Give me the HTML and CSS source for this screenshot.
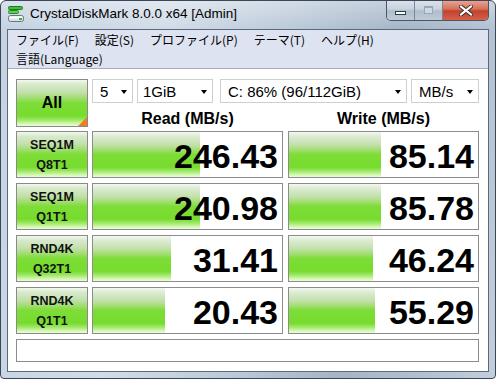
FILE: index.html
```html
<!DOCTYPE html>
<html lang="ja">
<head>
<meta charset="utf-8">
<title>CrystalDiskMark 8.0.0 x64 [Admin]</title>
<link rel="stylesheet" href="styles.css">
</head>
<body>
<div class="window">
  <div class="titlebar">
    <svg class="app-icon" width="16" height="16" viewBox="0 0 16 16">
      <rect x="0.5" y="0.5" width="14" height="3" rx="1" fill="#3fc03a" stroke="#1f7a22"/>
      <rect x="0.5" y="4.5" width="10" height="3" rx="1" fill="#5fd04a" stroke="#2a8a2a"/>
      <rect x="0.5" y="9.5" width="15" height="6" rx="2" fill="#dfe3e8" stroke="#6b7480"/>
      <rect x="1.5" y="10.5" width="13" height="2" rx="1" fill="#ffffff"/>
      <rect x="11" y="12" width="3" height="2" fill="#2fb82f"/>
    </svg>
    <span class="title">CrystalDiskMark 8.0.0 x64 [Admin]</span>
    <div class="caption">
      <div class="cap-btn cap-min"><span class="min-bar"></span></div>
      <div class="cap-btn cap-max"><span class="max-box"></span></div>
      <div class="cap-btn cap-close">
        <svg width="14" height="11" viewBox="0 0 14 11">
          <path d="M2 1.5 L12 9.5 M12 1.5 L2 9.5" stroke="#3a2a2a" stroke-width="4" stroke-linecap="square"/>
          <path d="M2 1.5 L12 9.5 M12 1.5 L2 9.5" stroke="#ffffff" stroke-width="2.2" stroke-linecap="square"/>
        </svg>
      </div>
    </div>
  </div>
  <div class="client">
    <div class="menubar">
      <div class="menu-row">
        <span class="menu-item">ファイル(F)</span>
        <span class="menu-item">設定(S)</span>
        <span class="menu-item">プロファイル(P)</span>
        <span class="menu-item">テーマ(T)</span>
        <span class="menu-item">ヘルプ(H)</span>
      </div>
      <div class="menu-row">
        <span class="menu-item">言語(Language)</span>
      </div>
    </div>
    <div class="content">
      <div class="top">
        <div class="all-btn">All<span class="corner"></span></div>
        <div class="selects">
          <div class="select sel-count"><span>5</span><span class="arrow"></span></div>
          <div class="select sel-size"><span>1GiB</span><span class="arrow"></span></div>
          <div class="select sel-drive"><span>C: 86% (96/112GiB)</span><span class="arrow"></span></div>
          <div class="select sel-unit"><span>MB/s</span><span class="arrow"></span></div>
        </div>
        <div class="head">Read (MB/s)</div>
        <div class="head head-write">Write (MB/s)</div>
      </div>
      <div class="rows">
        <div class="label"><span>SEQ1M</span><span>Q8T1</span></div>
        <div class="cell" style="--w:107px">246.43</div>
        <div class="cell cell-write" style="--w:92px">85.14</div>

        <div class="label"><span>SEQ1M</span><span>Q1T1</span></div>
        <div class="cell" style="--w:107px">240.98</div>
        <div class="cell cell-write" style="--w:92px">85.78</div>

        <div class="label"><span>RND4K</span><span>Q32T1</span></div>
        <div class="cell" style="--w:78px">31.41</div>
        <div class="cell cell-write" style="--w:84px">46.24</div>

        <div class="label"><span>RND4K</span><span>Q1T1</span></div>
        <div class="cell" style="--w:72px">20.43</div>
        <div class="cell cell-write" style="--w:86px">55.29</div>
      </div>
      <div class="status"></div>
    </div>
  </div>
</div>
</body>
</html>
```
FILE: styles.css
```css
html, body {
  margin: 0;
  padding: 0;
  background: #ffffff;
}

body {
  font-family: "Liberation Sans", Arial, sans-serif;
  color: #000;
}

.window {
  width: 496px;
  height: 379px;
  box-sizing: border-box;
  border: 1px solid #3b4757;
  border-radius: 6px 6px 4px 4px;
  overflow: hidden;
  display: flex;
  flex-direction: column;
  background:
    linear-gradient(to bottom, rgba(255,255,255,0.35), rgba(255,255,255,0) 28px),
    linear-gradient(100deg, #c4d2e2 0%, #d1dce8 30%, #bccad9 52%, #a5b5c8 72%, #b3c1d1 88%, #c3cfdc 100%);
}

/* ---------- title bar ---------- */
.titlebar {
  height: 28px;
  flex: none;
  display: flex;
  align-items: flex-start;
  padding-right: 6px;
}

.app-icon {
  margin: 5px 0 0 7px;
  flex: none;
}

.title {
  margin: 3px 0 0 6px;
  font-size: 13.5px;
  line-height: 20px;
  color: #000;
  white-space: nowrap;
}

.caption {
  margin-left: auto;
  margin-top: -1px;
  display: flex;
  height: 20px;
  border: 1px solid #4a5566;
  border-top: none;
  border-radius: 0 0 5px 5px;
  overflow: hidden;
}

.cap-btn {
  height: 20px;
  display: flex;
  align-items: center;
  justify-content: center;
}

.cap-min, .cap-max {
  width: 27px;
  background: linear-gradient(to bottom, #dbe3ec 0%, #c8d3df 45%, #aebdcd 55%, #bfcbd8 100%);
  border-right: 1px solid #7b8797;
}

.min-bar {
  width: 9px;
  height: 2px;
  margin-top: 5px;
  background: #fff;
  border: 1px solid #2f3a48;
}

.max-box {
  width: 7px;
  height: 5px;
  border: 1px solid #9aa6b4;
  border-top-width: 2px;
  background: #cfd8e2;
  margin-top: -1px;
}

.cap-close {
  width: 45px;
  background: linear-gradient(to bottom, #e8a89a 0%, #d9705c 45%, #c2432c 55%, #d6604a 100%);
}

/* ---------- client ---------- */
.client {
  flex: 1;
  margin: 0 6px 6px 6px;
  border: 1px solid #5a697e;
  background: #ffffff;
  display: flex;
  flex-direction: column;
}

.menubar {
  height: 38px;
  background: #dde3f0;
  border-bottom: 1px solid #a5adbb;
  font-family: "Noto Sans CJK JP", "Liberation Sans", sans-serif;
  font-size: 12px;
}

.menu-row {
  height: 19px;
  line-height: 19px;
  display: flex;
  gap: 16px;
  padding-left: 8px;
  white-space: nowrap;
}

.content {
  padding: 10px 9px 0 8px;
}

/* ---------- top controls ---------- */
.top {
  display: grid;
  grid-template-columns: 72px 191px 192px;
  grid-template-rows: 24px 24px;
  column-gap: 4px;
}

.all-btn {
  grid-row: 1 / 3;
  position: relative;
  box-sizing: border-box;
  border: 1px solid #8a8a8a;
  display: flex;
  align-items: center;
  justify-content: center;
  font-weight: bold;
  font-size: 16px;
  background: linear-gradient(to bottom, #f2f8ee 0%, #d7e9cb 10%, #c3e1ad 26%, #a5dd78 38%, #7ddd36 50%, #77dc2e 78%, #98e75e 86%, #ccf5a4 94%, #eefce2 100%);
}

.corner {
  position: absolute;
  right: 0;
  bottom: 0;
  width: 0;
  height: 0;
  border-left: 9px solid transparent;
  border-bottom: 9px solid #f07d1e;
}

.selects {
  grid-column: 2 / 4;
  display: flex;
}

.select {
  box-sizing: border-box;
  height: 24px;
  border: 1px solid #cfcfcf;
  background: #fff;
  display: flex;
  align-items: center;
  justify-content: space-between;
  padding: 1px 5px 0 7px;
  font-size: 15px;
  white-space: nowrap;
}

.sel-count { width: 41px; }
.sel-size { width: 76px; margin-left: 4px; padding-left: 5px; }
.sel-drive { width: 187px; margin-left: 7px; }
.sel-unit { width: 68px; margin-left: 4px; }

.arrow {
  width: 0;
  height: 0;
  border-left: 3.5px solid transparent;
  border-right: 3.5px solid transparent;
  border-top: 4px solid #000;
  margin-top: 1px;
}

.head {
  box-sizing: border-box;
  height: 24px;
  padding-top: 8px;
  line-height: 16px;
  font-size: 16px;
  font-weight: bold;
  text-align: center;
  white-space: nowrap;
}

.head-write {
  justify-self: end;
  width: 191px;
}

/* ---------- result rows ---------- */
.rows {
  margin-top: 4px;
  display: grid;
  grid-template-columns: 72px 191px 192px;
  grid-auto-rows: 47px;
  column-gap: 4px;
  row-gap: 5px;
}

.label {
  box-sizing: border-box;
  border: 1px solid #8a8a8a;
  display: flex;
  flex-direction: column;
  align-items: center;
  justify-content: center;
  font-size: 12.5px;
  font-weight: bold;
  line-height: 20px;
  color: #111;
  background: linear-gradient(to bottom, #f2f8ee 0%, #d7e9cb 10%, #c3e1ad 26%, #a5dd78 38%, #7ddd36 50%, #77dc2e 78%, #98e75e 86%, #ccf5a4 94%, #eefce2 100%);
}

.cell {
  box-sizing: border-box;
  border: 1px solid #8c8c8c;
  padding: 3px 4px 0 0;
  line-height: 42px;
  font-size: 34px;
  font-weight: bold;
  text-align: right;
  white-space: nowrap;
  background-color: #fff;
  background-image: linear-gradient(to bottom, #f2f8ee 0%, #dcebd2 10%, #c6e2b2 26%, #a8de7c 38%, #7ddd36 50%, #77dc2e 78%, #9ae862 86%, #cdf6a6 94%, #eefce2 100%);
  background-repeat: no-repeat;
  background-size: var(--w) 100%;
}

.cell-write {
  justify-self: end;
  width: 191px;
}

.status {
  margin-top: 5px;
  height: 23px;
  box-sizing: border-box;
  border: 1px solid #8c8c8c;
  background: #fff;
}
```
